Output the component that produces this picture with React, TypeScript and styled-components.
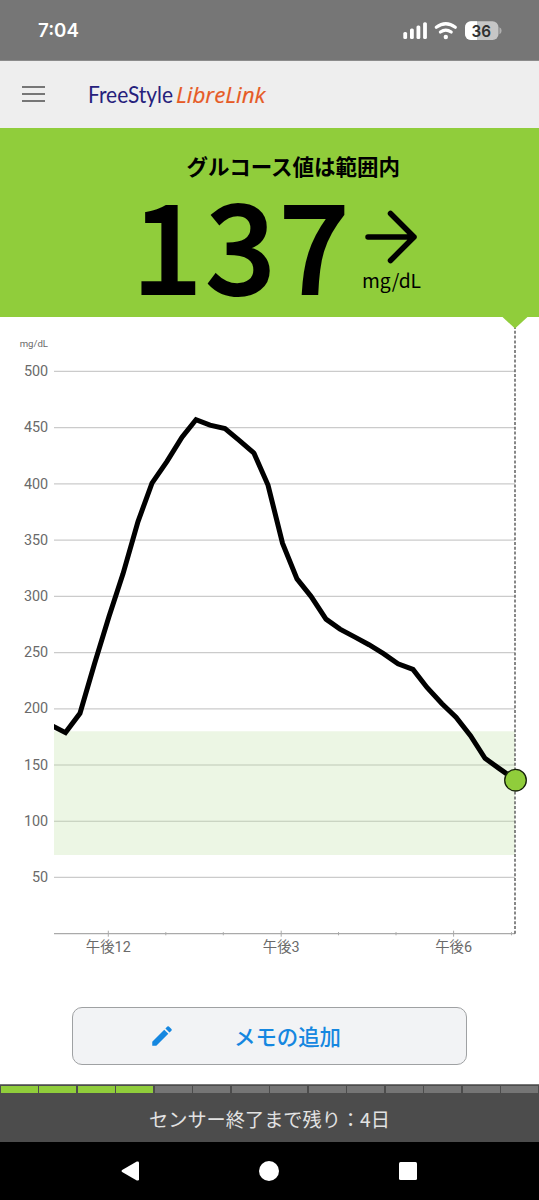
import React from "react";
import styled, { createGlobalStyle } from "styled-components";

const jp = `"Noto Sans CJK JP", sans-serif`;
const green = "#90cd3b";

const GlobalStyle = createGlobalStyle`
  *, *::before, *::after { box-sizing: border-box; }
  body { margin: 0; background: #fff; font-family: ${jp}; }
`;

const Screen = styled.div`
  width: 539px;
  height: 1200px;
  display: flex;
  flex-direction: column;
  overflow: hidden;
  background: #fff;
`;

const StatusBar = styled.header`
  height: 61px;
  flex: none;
  display: flex;
  justify-content: space-between;
  padding: 0 37px 0 38px;
  background: #767676;
  border-bottom: 1px solid #8b8b8b;
`;

const Clock = styled.span`
  padding-top: 18px;
  font: 600 18.7px/26px Inter, sans-serif;
  color: #fff;
`;

const StatusIcons = styled.svg`
  display: block;
  width: 102px;
  height: 60px;
`;

const AppBar = styled.div`
  height: 67px;
  flex: none;
  display: flex;
  align-items: center;
  gap: 43px;
  padding-left: 22px;
  background: #eee;
`;

const MenuButton = styled.button`
  width: 23px;
  height: 16px;
  padding: 0;
  margin-bottom: 1px;
  border: 0;
  background: none;
  display: flex;
  flex-direction: column;
  justify-content: space-between;
`;

const MenuLine = styled.span`
  height: 2px;
  background: #767676;
`;

const Logo = styled.svg`
  display: block;
  width: 182px;
  height: 40px;
`;

const Reading = styled.section`
  height: 189px;
  flex: none;
  background: ${green};
  display: flex;
  flex-direction: column;
  color: #000;
`;

const ReadingTitle = styled.h1`
  margin: 21px 0 0 186.6px;
  font: 700 21.5px/34px ${jp};
`;

const ReadingRow = styled.div`
  display: flex;
  padding-left: 132px;
`;

const Value = styled.span`
  width: 222px;
  height: 127px;
  font: 500 123px/115px ${jp};
  letter-spacing: 3.4px;
  -webkit-text-stroke: 2px #000;
  white-space: nowrap;
`;

const Trend = styled.div`
  padding: 27px 0 0 8px;
  display: flex;
  flex-direction: column;
`;

const TrendArrow = styled.svg`
  display: block;
  width: 58px;
  height: 56px;
`;

const Unit = styled.span`
  font: 400 19.3px/28px ${jp};
`;

const ChartArea = styled.section`
  height: 667px;
  flex: none;
`;

const ChartSvg = styled.svg`
  display: block;
  width: 539px;
  height: 667px;
`;

const AxisText = styled.text`
  font-family: Roboto, "Noto Sans CJK JP", sans-serif;
  font-size: ${(p: { $size?: number }) => p.$size ?? 14.4}px;
  fill: #6a6a6a;
`;

const Actions = styled.div`
  height: 100px;
  flex: none;
  display: flex;
  justify-content: center;
  align-items: flex-start;
  padding-top: 23px;
`;

const NoteButton = styled.button`
  width: 395px;
  height: 58px;
  padding: 0 0 0 76px;
  display: flex;
  align-items: center;
  border: 1px solid #9fa1a3;
  border-radius: 10px;
  background: #f2f3f5;
  color: #1587e0;
  font: 500 21.4px/30px ${jp};
`;

const Pencil = styled.svg`
  width: 26px;
  height: 26px;
  margin-right: 59px;
`;

const Sensor = styled.section`
  height: 58px;
  flex: none;
  background: #4c4c4c;
  border-top: 1px solid #777;
  color: #e2e2e2;
  text-align: center;
`;

const Days = styled.div`
  display: grid;
  grid-template-columns: repeat(14, 1fr);
  column-gap: 1.8px;
  padding: 1px 1px 0;
  height: 8px;
`;

const Day = styled.span<{ $left: boolean }>`
  background: ${(p) => (p.$left ? green : "#757575")};
`;

const SensorText = styled.p`
  margin: 12px 0 0;
  font: 400 19.2px/29px ${jp};
`;

const NavBar = styled.nav`
  height: 58px;
  flex: none;
  display: flex;
  justify-content: center;
  align-items: center;
  gap: 119px;
  padding-right: 1px;
  background: #000;
`;

const NavIcon = styled.svg`
  width: 20px;
  height: 20px;
  fill: #fff;
`;

const LEFT = 54;
const RIGHT = 515;
const yOf = (v: number) => 54.4 + (500 - v) * 1.1246;

const samples: [number, number][] = [
  [50, 186], [54, 184], [65.5, 178.8], [80, 196], [94.5, 240], [109, 282], [123, 320],
  [138, 366.5], [152, 400.6], [167, 420], [182, 441.6], [196, 457.1], [210, 452.2],
  [225, 449.1], [239.5, 438.5], [254, 427.3], [268, 398.9], [282.5, 347.3], [297, 315.5],
  [311, 300], [326, 279.7], [340, 270.8], [355, 263.7], [369, 257], [383.5, 249],
  [398, 240], [413, 235], [427, 219], [442, 204.5], [456, 192.5], [470.5, 176],
  [485, 156], [499, 147], [515, 137],
];

const levels = [500, 450, 400, 350, 300, 250, 200, 150, 100, 50];
const hours = [
  { x: 108.3, label: "午後12" },
  { x: 165.8 },
  { x: 223.3 },
  { x: 281.2, label: "午後3" },
  { x: 338.5 },
  { x: 396 },
  { x: 453.6, label: "午後6" },
  { x: 511.5 },
];

function GlucoseChart() {
  const base = yOf(0);
  return (
    <ChartArea>
      <ChartSvg viewBox="0 0 539 667">
        <defs>
          <clipPath id="plot">
            <rect x={LEFT} y="0" width="485" height="620" />
          </clipPath>
        </defs>
        <AxisText $size={9.6} x="48" y="30" textAnchor="end">mg/dL</AxisText>
        {levels.map((v) => (
          <g key={v}>
            <line x1={LEFT} x2={RIGHT} y1={yOf(v)} y2={yOf(v)} stroke="#cbcbcb" strokeWidth="1.2" />
            <AxisText x="48.2" y={yOf(v) + 4.7} textAnchor="end">{v}</AxisText>
          </g>
        ))}
        <rect x={LEFT} y={yOf(180)} width={RIGHT - LEFT} height={yOf(70) - yOf(180)} fill="#79bd41" fillOpacity=".14" />
        <line x1={LEFT} x2={RIGHT} y1={base} y2={base} stroke="#aaa" strokeWidth="1.2" />
        {hours.map(({ x, label }) => (
          <g key={x}>
            <line x1={x} x2={x} y1={base - (label ? 3 : 1.6)} y2={base + (label ? 3 : 1.6)} stroke="#aaa" />
            {label && <AxisText x={x} y={base + 18} textAnchor="middle">{label}</AxisText>}
          </g>
        ))}
        <line x1="515" x2="515" y1="9" y2={base} stroke="#606060" strokeWidth="1.5" strokeDasharray="3 1.8" />
        <path d="M502.5 0H527.5L515 11.5Z" fill={green} />
        <polyline
          points={samples.map(([x, v]) => `${x},${yOf(v)}`).join(" ")}
          fill="none"
          stroke="#000"
          strokeWidth="5"
          strokeLinejoin="miter"
          clipPath="url(#plot)"
        />
        <circle cx="515.5" cy="463.2" r="10.8" fill={green} stroke="#15200a" strokeWidth="1.3" />
      </ChartSvg>
    </ChartArea>
  );
}

export default function App() {
  return (
    <Screen>
      <GlobalStyle />
      <StatusBar>
        <Clock>7:04</Clock>
        <StatusIcons viewBox="400 0 102 60">
          <g fill="#fff">
            <rect x="403.3" y="32" width="3.8" height="7" rx="1.5" />
            <rect x="410" y="28.5" width="3.8" height="10.5" rx="1.5" />
            <rect x="416.5" y="25.5" width="3.8" height="13.5" rx="1.5" />
            <rect x="423.1" y="22.3" width="3.8" height="16.7" rx="1.5" />
            <circle cx="445.8" cy="37" r="2.2" />
          </g>
          <g fill="none" stroke="#fff" strokeWidth="3.2" strokeLinecap="round">
            <path d="M436.3 27.3Q445.8 20.2 455.3 27.3" />
            <path d="M440.4 32Q445.8 28.3 451.2 32" />
          </g>
          <rect x="465" y="21.3" width="33.5" height="18.8" rx="6" fill="#c6c6c6" />
          <path d="M477 21.3H471A6 6 0 0 0 465 27.3V34.1A6 6 0 0 0 471 40.1H477Z" fill="#fff" />
          <path d="M499.4 27.2Q501.6 28 501.6 30.7T499.4 34.2Z" fill="#b0b0b0" />
          <text x="481.3" y="36.8" textAnchor="middle" fontFamily="Inter, sans-serif" fontWeight="600" fontSize="16.5" textLength="19.5" lengthAdjust="spacingAndGlyphs" fill="#303030">36</text>
        </StatusIcons>
      </StatusBar>
      <AppBar>
        <MenuButton aria-label="menu">
          <MenuLine />
          <MenuLine />
          <MenuLine />
        </MenuButton>
        <Logo viewBox="0 0 182 40">
          <text x="0" y="27.6" fontFamily="Lato, sans-serif" fontSize="23" textLength="85" lengthAdjust="spacingAndGlyphs" fill="#26217c">FreeStyle</text>
          <text x="88" y="27.8" fontFamily="Open Sans, sans-serif" fontStyle="italic" fontSize="22" textLength="89.5" lengthAdjust="spacingAndGlyphs" fill="#e65a25" stroke="#e65a25" strokeWidth=".2">LibreLink</text>
        </Logo>
      </AppBar>
      <Reading>
        <ReadingTitle>グルコース値は範囲内</ReadingTitle>
        <ReadingRow>
          <Value>137</Value>
          <Trend>
            <TrendArrow viewBox="0 0 58 56" fill="none" stroke="#000" strokeWidth="5.5" strokeLinecap="round" strokeLinejoin="round">
              <path d="M6 27H52M28.5 3.5L52 27L28.5 50.5" />
            </TrendArrow>
            <Unit>mg/dL</Unit>
          </Trend>
        </ReadingRow>
      </Reading>
      <GlucoseChart />
      <Actions>
        <NoteButton>
          <Pencil viewBox="0 0 24 24" fill="currentColor">
            <path d="M3 17.25V21h3.75L17.81 9.94l-3.75-3.75L3 17.25zM20.71 7.04a1 1 0 0 0 0-1.41l-2.34-2.34a1 1 0 0 0-1.41 0l-1.83 1.83 3.75 3.75 1.83-1.83z" />
          </Pencil>
          メモの追加
        </NoteButton>
      </Actions>
      <Sensor>
        <Days>
          {Array.from({ length: 14 }, (_, i) => (
            <Day key={i} $left={i < 4} />
          ))}
        </Days>
        <SensorText>センサー終了まで残り：4日</SensorText>
      </Sensor>
      <NavBar>
        <NavIcon viewBox="0 0 20 20"><path d="M2.1 9.1L16.8.6Q19 0 19 1.8V18.2Q19 20 16.8 19.4L2.1 11Q.8 10 2.1 9.1Z" /></NavIcon>
        <NavIcon viewBox="0 0 20 20"><circle cx="10" cy="10" r="10" /></NavIcon>
        <NavIcon viewBox="0 0 20 20"><rect x="1" y="1" width="18" height="18" rx="1.5" /></NavIcon>
      </NavBar>
    </Screen>
  );
}
